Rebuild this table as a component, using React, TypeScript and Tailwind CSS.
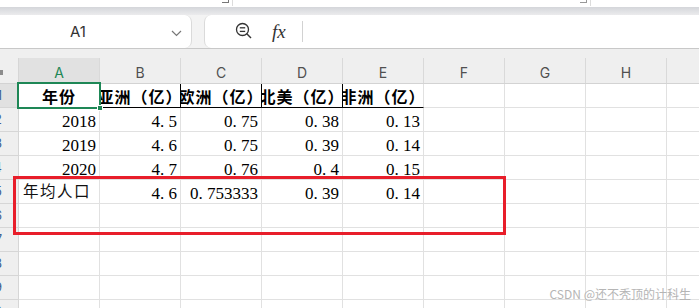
import React from "react";

const COLS = ["A", "B", "C", "D", "E", "F", "G", "H", "I"];

type Row = { cells: string[]; kind: "head" | "data" | "empty" };

const ROWS: Row[] = [
  { kind: "head", cells: ["年份", "亚洲（亿）", "欧洲（亿）", "北美（亿）", "非洲（亿）"] },
  { kind: "data", cells: ["2018", "4.5", "0.75", "0.38", "0.13"] },
  { kind: "data", cells: ["2019", "4.6", "0.75", "0.39", "0.14"] },
  { kind: "data", cells: ["2020", "4.7", "0.76", "0.4", "0.15"] },
  { kind: "data", cells: ["年均人口", "4.6", "0.753333", "0.39", "0.14"] },
  { kind: "empty", cells: [] },
  { kind: "empty", cells: [] },
  { kind: "empty", cells: [] },
  { kind: "empty", cells: [] },
  { kind: "empty", cells: [] },
];

function Num({ v }: { v: string }) {
  return (
    <span className="font-['Liberation_Serif',serif] text-[17px] leading-none text-black whitespace-nowrap">
      {v.split("").map((c, i) =>
        c === "." ? (
          <span key={i} className="inline-block w-[8.5px]">
            .
          </span>
        ) : (
          <span key={i}>{c}</span>
        )
      )}
    </span>
  );
}

function BodyCell({ row, col, text }: { row: Row; col: number; text?: string }) {
  const isHead = row.kind === "head";
  let border = "border-r border-b border-[#e1e1e1]";
  if (isHead && col <= 3) border = "border-r border-b border-r-black border-b-black";
  if (isHead && col === 4) border = "border-r border-b border-r-[#e1e1e1] border-b-black";

  if (!text) {
    return <div className={`w-[81px] h-[24px] shrink-0 ${border}`} />;
  }
  if (isHead) {
    return (
      <div className={`w-[81px] h-[24px] shrink-0 overflow-hidden flex items-center justify-center ${border}`}>
        <span className="font-['Noto_Sans_CJK_SC',sans-serif] font-bold text-[16px] tracking-[1px] leading-none whitespace-nowrap text-black">
          {text}
        </span>
      </div>
    );
  }
  const isCjk = /[\u4e00-\u9fff]/.test(text);
  if (isCjk) {
    return (
      <div className={`w-[81px] h-[24px] shrink-0 overflow-hidden flex items-end justify-start pl-[4px] pb-[5px] ${border}`}>
        <span className="font-['Noto_Sans_CJK_SC',sans-serif] text-[15.5px] tracking-[1.5px] leading-none whitespace-nowrap text-[#111]">
          {text}
        </span>
      </div>
    );
  }
  return (
    <div className={`w-[81px] h-[24px] shrink-0 overflow-hidden flex items-end justify-end pr-[3px] pb-[1px] ${border}`}>
      <Num v={text} />
    </div>
  );
}

export default function App() {
  return (
    <div className="relative w-[699px] h-[308px] overflow-hidden bg-white font-['Inter',sans-serif]">
      {/* top strip */}
      <div className="h-[7px] bg-white flex">
        <div className="ml-[222px] mt-0 w-[7px] h-[3px] border-b border-r border-[#777]" />
        <div className="ml-[3px] w-px h-[6px] bg-[#dcdcdc]" />
        <div className="ml-[347px] w-[7px] h-[3px] border-b border-r border-[#999]" />
        <div className="ml-[3px] w-px h-[6px] bg-[#dcdcdc]" />
      </div>
      <div className="h-[8px] bg-gradient-to-b from-[#d4d6da] to-[#ebebed]" />

      {/* name box + formula bar */}
      <div className="h-[33px] flex bg-[#f3f3f3]">
        <div className="w-[192px] h-full shrink-0 bg-white rounded-r-[7px] border-r border-[#dadada] flex items-center">
          <span className="ml-[70px] text-[15px] text-[#333] leading-none">A1</span>
          <svg className="ml-auto mr-[9px] mt-[3px]" width="11" height="7" viewBox="0 0 11 7">
            <polyline points="1,1 5.5,5.5 10,1" fill="none" stroke="#777" strokeWidth="1.2" />
          </svg>
        </div>
        <div className="ml-[12px] flex-1 h-full bg-white rounded-l-[7px] border-l border-[#dadada] flex items-center">
          <svg className="ml-[30px]" width="19" height="19" viewBox="0 0 19 19">
            <circle cx="7.5" cy="7.5" r="6" fill="none" stroke="#333" strokeWidth="1.3" />
            <line x1="4.8" y1="5.8" x2="10.2" y2="5.8" stroke="#333" strokeWidth="1.3" />
            <line x1="4.8" y1="9.4" x2="10.2" y2="9.4" stroke="#333" strokeWidth="1.3" />
            <line x1="11.8" y1="11.8" x2="16" y2="16" stroke="#333" strokeWidth="1.4" />
          </svg>
          <span className="ml-[18px] font-['Liberation_Serif',serif] italic text-[19px] leading-none text-[#333]">
            fx
          </span>
          <div className="ml-[16px] w-px h-[21px] bg-[#d2d2d2]" />
        </div>
      </div>
      <div className="h-px bg-[#c8c8c8]" />
      <div className="h-[9px] bg-[#efefef]" />

      {/* column headers */}
      <div className="flex h-[26px] bg-[#efefef] border-b border-[#d3d3d3]">
        <div className="w-[19px] shrink-0 border-r border-[#d6d6d6] flex items-center">
          <div className="w-[3px] h-[5px] bg-[#8c8c8c] mt-[3px]" />
        </div>
        {COLS.map((c) => (
          <div
            key={c}
            className={
              c === "A"
                ? "w-[81px] shrink-0 border-r border-[#d9d9d9] flex items-center justify-center pt-[3px] text-[14px] bg-[#e1e1e1] text-[#1e8756]"
                : "w-[81px] shrink-0 border-r border-[#d9d9d9] flex items-center justify-center pt-[3px] text-[14px] text-[#505050]"
            }
          >
            {c === "I" ? null : c}
          </div>
        ))}
      </div>

      {/* body rows */}
      {ROWS.map((row, ri) => (
        <div key={ri} className="flex">
          <div
            className={
              ri === 0
                ? "w-[19px] h-[24px] shrink-0 border-r border-b border-[#d6d6d6] bg-[#e1e1e1] overflow-hidden flex items-center justify-end"
                : "w-[19px] h-[24px] shrink-0 border-r border-b border-[#d6d6d6] bg-[#efefef] overflow-hidden flex items-center justify-end"
            }
          >
            <span className="mr-[16px] text-[13px] leading-none text-[#3e5f8f]">{ri + 1}</span>
          </div>
          {COLS.map((c, ci) => (
            <BodyCell key={c} row={row} col={ci} text={row.cells[ci]} />
          ))}
        </div>
      ))}

      {/* selection on A1 */}
      <div className="absolute left-[17px] top-[82px] w-[84px] h-[27px] border-2 border-[#1e8756]" />
      <div className="absolute left-[97px] top-[105px] w-[6px] h-[6px] bg-[#1e8756] border border-white" />

      {/* red annotation box */}
      <div className="absolute left-[13px] top-[176px] w-[493px] h-[59px] border-[3px] border-[#e81e2a]" />

      {/* watermark */}
      <div className="absolute right-[8px] top-[286px] text-[12px] leading-[16px] text-[#b5b5b5] font-['Noto_Sans_CJK_SC',sans-serif] whitespace-nowrap">
        CSDN @还不秃顶的计科生
      </div>
    </div>
  );
}
